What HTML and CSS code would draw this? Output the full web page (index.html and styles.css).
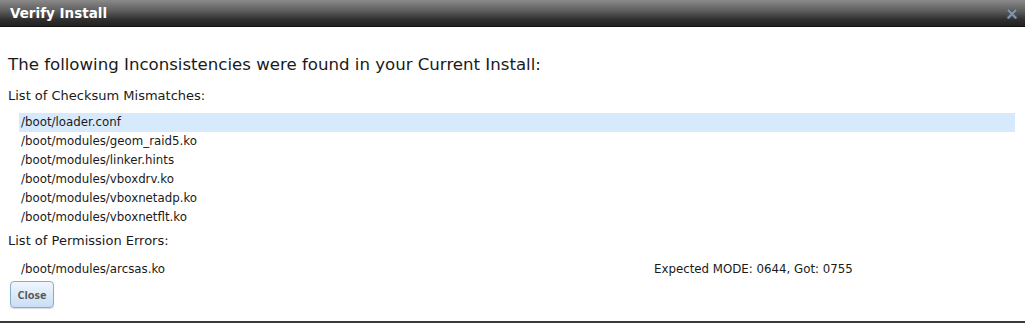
FILE: index.html
```html
<!DOCTYPE html>
<html lang="en">
<head>
    <meta charset="UTF-8">
    <title>Verify Install</title>
    <link rel="stylesheet" href="styles.css">
</head>
<body>
    <div class="dialog">
        <div class="titlebar">
            <span class="title">Verify Install</span>
            <svg class="close-x" width="10" height="10" viewBox="0 0 10 10">
                <path d="M1.5 1.5 L8.5 8.5 M8.5 1.5 L1.5 8.5" stroke="#4a5566" stroke-width="3.4" stroke-linecap="square"/>
                <path d="M1.5 1.5 L8.5 8.5 M8.5 1.5 L1.5 8.5" stroke="#8494aa" stroke-width="2" stroke-linecap="square"/>
            </svg>
        </div>
        <div class="content">
            <h2>The following Inconsistencies were found in your Current Install:</h2>
            <p class="section">List of Checksum Mismatches:</p>
            <ul class="files">
                <li class="selected">/boot/loader.conf</li>
                <li>/boot/modules/geom_raid5.ko</li>
                <li>/boot/modules/linker.hints</li>
                <li>/boot/modules/vboxdrv.ko</li>
                <li>/boot/modules/vboxnetadp.ko</li>
                <li>/boot/modules/vboxnetflt.ko</li>
            </ul>
            <p class="section">List of Permission Errors:</p>
            <div class="perm-row">
                <span>/boot/modules/arcsas.ko</span>
                <span>Expected MODE: 0644, Got: 0755</span>
            </div>
            <button class="btn">Close</button>
        </div>
    </div>
</body>
</html>
```
FILE: styles.css
```css
body {
    margin: 0;
    font-family: "DejaVu Sans", Verdana, sans-serif;
    background-color: #ffffff;
    color: #1a1a1a;
}
.dialog {
    width: 1025px;
    height: 323px;
    display: flex;
    flex-direction: column;
    border-bottom: 2px solid #3a3a3a;
    box-sizing: border-box;
}
.titlebar {
    height: 27px;
    display: flex;
    align-items: center;
    justify-content: space-between;
    padding: 0 8px 0 10px;
    background: linear-gradient(#8a8a8a, #5a5a5a 45%, #303030 75%, #222222);
    border-bottom: 1px solid #111;
    box-sizing: border-box;
}
.title {
    color: #ffffff;
    font-weight: bold;
    font-size: 13.5px;
}
.close-x {
    margin-top: 1px;
}
.content {
    padding: 28px 8px 0 8px;
}
h2 {
    font-size: 16.6px;
    font-weight: normal;
    margin: 0 0 14px 0;
}
.section {
    font-size: 13px;
    margin: 2px 0 10px 0;
}
.files {
    list-style: none;
    margin: 0 2px 0 11px;
    padding: 0;
}
.files li {
    font-size: 11.8px;
    height: 19px;
    line-height: 19px;
    padding-left: 2px;
}
.files li.selected {
    background-color: #d6e9fd;
}
.files + .section {
    margin-top: 6px;
}
.perm-row {
    display: grid;
    grid-template-columns: 633px 1fr;
    font-size: 11.8px;
    margin: 12px 0 0 13px;
    height: 18px;
    line-height: 18px;
}
.btn {
    margin: 3px 0 0 2px;
    width: 44px;
    height: 27px;
    border: 1px solid #8aaccc;
    border-radius: 4px;
    background: linear-gradient(#f0f6fd, #c9def5);
    color: #5a5a5a;
    font-family: "Open Sans", sans-serif;
    font-weight: bold;
    font-size: 11px;
    padding: 0;
    box-shadow: 0 1px 1px rgba(0,0,0,0.15);
}
```
